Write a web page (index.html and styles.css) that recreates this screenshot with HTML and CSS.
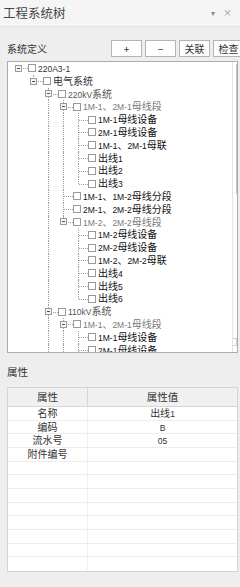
FILE: index.html
```html
<!DOCTYPE html>
<html lang="zh">
<head>
<meta charset="utf-8">
<title>工程系统树</title>
<link rel="stylesheet" href="styles.css">
</head>
<body>
<div class="win">
  <div class="title">
    <span class="tt">工程系统树</span>
    <span class="ctl"><span class="dd">▾</span><span class="cx">×</span></span>
  </div>
  <div class="toolbar">
    <span class="lbl">系统定义</span>
    <div class="btns">
      <button class="btn">+</button>
      <button class="btn">−</button>
      <button class="btn">关联</button>
      <button class="btn">检查</button>
    </div>
  </div>
  <div class="tree">
    <div class="nodes">
      <div class="row"><i class="j r"><b class="ex"></b></i><i class="cb"></i><span class="t c1"><span class="l">220A3-1</span></span></div>
      <div class="row"><i class="g"></i><i class="j h"><b class="ex"></b></i><i class="cb"></i><span class="t c1">电气系统</span></div>
      <div class="row"><i class="g"></i><i class="g"></i><i class="j f"><b class="ex"></b></i><i class="cb"></i><span class="t c2"><span class="l">220kV</span>系统</span></div>
      <div class="row"><i class="g"></i><i class="g"></i><i class="g v"></i><i class="j f"><b class="ex"></b></i><i class="cb"></i><span class="t c3"><span class="l">1M-1</span>、<span class="l">2M-1</span>母线段</span></div>
      <div class="row"><i class="g"></i><i class="g"></i><i class="g v"></i><i class="g v"></i><i class="j f"></i><i class="cb"></i><span class="t c4"><span class="l">1M-1</span>母线设备</span></div>
      <div class="row"><i class="g"></i><i class="g"></i><i class="g v"></i><i class="g v"></i><i class="j f"></i><i class="cb"></i><span class="t c4"><span class="l">2M-1</span>母线设备</span></div>
      <div class="row"><i class="g"></i><i class="g"></i><i class="g v"></i><i class="g v"></i><i class="j f"></i><i class="cb"></i><span class="t c4"><span class="l">1M-1</span>、<span class="l">2M-1</span>母联</span></div>
      <div class="row"><i class="g"></i><i class="g"></i><i class="g v"></i><i class="g v"></i><i class="j f"></i><i class="cb"></i><span class="t c4">出线<span class="l">1</span></span></div>
      <div class="row"><i class="g"></i><i class="g"></i><i class="g v"></i><i class="g v"></i><i class="j f"></i><i class="cb"></i><span class="t c4">出线<span class="l">2</span></span></div>
      <div class="row"><i class="g"></i><i class="g"></i><i class="g v"></i><i class="g v"></i><i class="j h"></i><i class="cb"></i><span class="t c4">出线<span class="l">3</span></span></div>
      <div class="row"><i class="g"></i><i class="g"></i><i class="g v"></i><i class="j f"></i><i class="cb"></i><span class="t c4"><span class="l">1M-1</span>、<span class="l">1M-2</span>母线分段</span></div>
      <div class="row"><i class="g"></i><i class="g"></i><i class="g v"></i><i class="j f"></i><i class="cb"></i><span class="t c4"><span class="l">2M-1</span>、<span class="l">2M-2</span>母线分段</span></div>
      <div class="row"><i class="g"></i><i class="g"></i><i class="g v"></i><i class="j h"><b class="ex"></b></i><i class="cb"></i><span class="t c3"><span class="l">1M-2</span>、<span class="l">2M-2</span>母线段</span></div>
      <div class="row"><i class="g"></i><i class="g"></i><i class="g v"></i><i class="g"></i><i class="j f"></i><i class="cb"></i><span class="t c4"><span class="l">1M-2</span>母线设备</span></div>
      <div class="row"><i class="g"></i><i class="g"></i><i class="g v"></i><i class="g"></i><i class="j f"></i><i class="cb"></i><span class="t c4"><span class="l">2M-2</span>母线设备</span></div>
      <div class="row"><i class="g"></i><i class="g"></i><i class="g v"></i><i class="g"></i><i class="j f"></i><i class="cb"></i><span class="t c4"><span class="l">1M-2</span>、<span class="l">2M-2</span>母联</span></div>
      <div class="row"><i class="g"></i><i class="g"></i><i class="g v"></i><i class="g"></i><i class="j f"></i><i class="cb"></i><span class="t c4">出线<span class="l">4</span></span></div>
      <div class="row"><i class="g"></i><i class="g"></i><i class="g v"></i><i class="g"></i><i class="j f"></i><i class="cb"></i><span class="t c4">出线<span class="l">5</span></span></div>
      <div class="row"><i class="g"></i><i class="g"></i><i class="g v"></i><i class="g"></i><i class="j h"></i><i class="cb"></i><span class="t c4">出线<span class="l">6</span></span></div>
      <div class="row"><i class="g"></i><i class="g"></i><i class="j f"><b class="ex"></b></i><i class="cb"></i><span class="t c2"><span class="l">110kV</span>系统</span></div>
      <div class="row"><i class="g"></i><i class="g"></i><i class="g v"></i><i class="j f"><b class="ex"></b></i><i class="cb"></i><span class="t c3"><span class="l">1M-1</span>、<span class="l">2M-1</span>母线段</span></div>
      <div class="row"><i class="g"></i><i class="g"></i><i class="g v"></i><i class="g v"></i><i class="j f"></i><i class="cb"></i><span class="t c4"><span class="l">1M-1</span>母线设备</span></div>
      <div class="row"><i class="g"></i><i class="g"></i><i class="g v"></i><i class="g v"></i><i class="j f"></i><i class="cb"></i><span class="t c4"><span class="l">2M-1</span>母线设备</span></div>
    </div>
    <div class="sb"><div class="thumb"></div><div class="arr"></div></div>
  </div>
  <div class="plabel">属性</div>
  <div class="ptable">
    <div class="pr ph"><div class="pc">属性</div><div class="pc">属性值</div></div>
    <div class="pr"><div class="pc">名称</div><div class="pc">出线<span class="l">1</span></div></div>
    <div class="pr"><div class="pc">编码</div><div class="pc"><span class="l">B</span></div></div>
    <div class="pr"><div class="pc">流水号</div><div class="pc"><span class="l">05</span></div></div>
    <div class="pr"><div class="pc">附件编号</div><div class="pc"></div></div>
    <div class="pr"><div class="pc"></div><div class="pc"></div></div>
    <div class="pr"><div class="pc"></div><div class="pc"></div></div>
    <div class="pr"><div class="pc"></div><div class="pc"></div></div>
    <div class="pr"><div class="pc"></div><div class="pc"></div></div>
    <div class="pr"><div class="pc"></div><div class="pc"></div></div>
    <div class="pr"><div class="pc"></div><div class="pc"></div></div>
    <div class="pr"><div class="pc"></div><div class="pc"></div></div>
    <div class="pr last"><div class="pc"></div><div class="pc"></div></div>
  </div>
</div>
</body>
</html>
```

FILE: styles.css
```css
* { box-sizing: border-box; margin: 0; padding: 0; }
html, body { width: 240px; height: 587px; overflow: hidden; }
body {
  background: #eeeeee;
  font-family: "Noto Sans CJK SC", sans-serif;
  color: #333;
}
.win {
  width: 240px;
  height: 587px;
  overflow: hidden;
  display: flex;
  flex-direction: column;
}
.title {
  height: 27px;
  flex: none;
  background: #f5f5f5;
  border-bottom: 1px solid #e2e2e2;
  display: flex;
  align-items: center;
  justify-content: space-between;
  padding: 0 8px 1px 3px;
}
.tt { font-size: 12.5px; color: #444; line-height: 16px; }
.ctl { display: flex; gap: 8px; color: #8a8a8a; font-size: 9px; align-items: center; }
.dd { font-size: 8px; }
.toolbar {
  flex: none;
  display: flex;
  align-items: center;
  padding: 13px 0 4px 7px;
}
.lbl { width: 104px; flex: none; font-size: 10px; color: #333; line-height: 17px; }
.btns { display: flex; gap: 3px; flex: none; }
.btn {
  width: 31px;
  height: 17px;
  background: #fefefe;
  border: 1px solid #b4b4b4;
  font: 10px "Noto Sans CJK SC", sans-serif;
  color: #333;
  line-height: 14px;
}
.tree {
  flex: none;
  margin-left: 7px;
  width: 231px;
  height: 292px;
  background: #fff;
  border: 1px solid #acacac;
  display: flex;
}
.nodes { flex: 1; overflow: hidden; padding-left: 3px; }
.row {
  height: 12.8px;
  display: flex;
  align-items: stretch;
  white-space: nowrap;
}
.g, .j {
  flex: none;
  width: 15px;
  position: relative;
  display: flex;
  align-items: center;
  justify-content: center;
}
.v::before, .j::before {
  content: "";
  position: absolute;
  left: 7px;
  top: 0;
  bottom: 0;
  border-left: 1px dotted #a0a0a0;
}
.j.h::before { bottom: 50%; }
.j.r::before { display: none; }
.j::after {
  content: "";
  position: absolute;
  left: 8px;
  right: -2px;
  top: 50%;
  border-top: 1px dotted #a0a0a0;
}
.ex {
  position: relative;
  z-index: 1;
  width: 7px;
  height: 7px;
  background: #f4f4f4;
  border: 1px solid #9a9a9a;
  display: flex;
  align-items: center;
  justify-content: center;
}
.ex::before {
  content: "";
  width: 3px;
  height: 1px;
  background: #555;
}
.cb {
  flex: none;
  align-self: center;
  width: 8px;
  height: 8px;
  margin-left: 2px;
  border: 1px solid #9a9a9a;
  background: #fff;
}
.t {
  align-self: center;
  margin-left: 2px;
  font-size: 10px;
  line-height: 12.8px;
}
.l { font-family: "Liberation Sans", sans-serif; font-size: 8.5px; line-height: 1; }
.c1 { color: #333; }
.c2 { color: #555; }
.c3 { color: #7a7a7a; }
.c4 { color: #111; }
.sb {
  flex: none;
  width: 5px;
  border-left: 1px solid #e4e4e4;
  display: flex;
  flex-direction: column;
  justify-content: space-between;
  padding: 2px 0 6px;
}
.thumb { height: 130px; border-right: 1px solid #c8c8c8; }
.arr { height: 8px; border: 1px solid #cfcfcf; border-left: none; }
.plabel {
  flex: none;
  margin: 11px 0 0 7px;
  height: 16px;
  line-height: 16px;
  font-size: 10.5px;
  color: #333;
}
.ptable {
  flex: none;
  margin: 7px 0 0 7px;
  width: 231px;
  background: #fff;
  border: 1px solid #d4d4d4;
}
.pr {
  display: grid;
  grid-template-columns: 80px 1fr;
  height: 13.67px;
  border-bottom: 1px solid #ededed;
}
.pr.last { border-bottom: none; }
.ph {
  height: 19px;
  background: #f0f0f0;
  border-bottom: 1px solid #d6d6d6;
}
.pc {
  text-align: center;
  font-size: 10px;
  line-height: 12.5px;
  color: #333;
  border-right: 1px solid #efefef;
}
.pc:last-child { border-right: none; }
.ph .pc { line-height: 18px; border-right-color: #d6d6d6; font-size: 10.5px; }
```
